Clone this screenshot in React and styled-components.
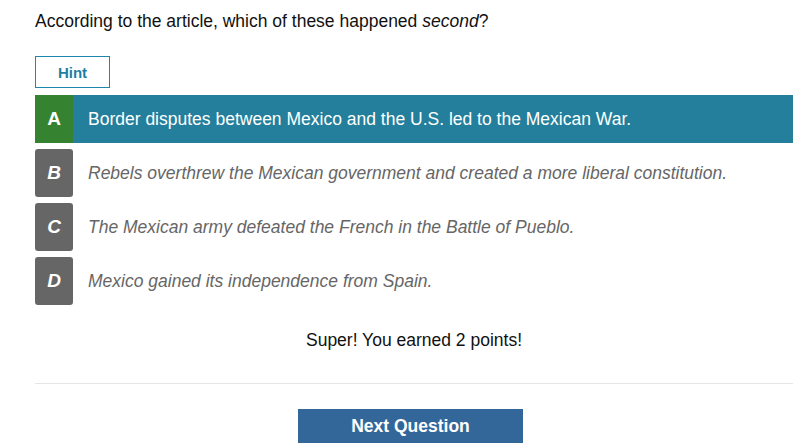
import React from "react";
import styled, { createGlobalStyle } from "styled-components";

const Global = createGlobalStyle`
  html, body { margin: 0; padding: 0; background: #fff; }
  body { font-family: "Liberation Sans", Arial, sans-serif; }
`;

const Page = styled.div`
  width: 810px;
  height: 447px;
  box-sizing: border-box;
  padding: 11px 17px 0 35px;
  overflow: hidden;
`;

const Question = styled.div`
  font-size: 17.5px;
  line-height: 20px;
  color: #111;
  em { font-style: italic; }
`;

const HintButton = styled.button`
  margin-top: 25px;
  width: 75px;
  height: 32px;
  box-sizing: border-box;
  border: 1px solid #1f87ad;
  background: #fff;
  color: #1f7fa3;
  font-family: "Liberation Sans", Arial, sans-serif;
  font-weight: bold;
  font-size: 15px;
  padding: 0;
  display: block;
`;

const Choices = styled.div`
  margin-top: 7px;
  display: flex;
  flex-direction: column;
  gap: 6px;
`;

const Choice = styled.div`
  display: flex;
  align-items: center;
  height: 48px;
  background: ${(p) => (p.$selected ? "#237f9b" : "transparent")};
`;

const Letter = styled.div`
  width: 38px;
  height: 48px;
  flex: none;
  display: flex;
  align-items: center;
  justify-content: center;
  color: #fff;
  font-weight: bold;
  font-size: 19px;
  font-style: ${(p) => (p.$selected ? "normal" : "italic")};
  background: ${(p) => (p.$selected ? "#358331" : "#666666")};
  border-radius: ${(p) => (p.$selected ? "0" : "3px")};
`;

const ChoiceText = styled.div`
  margin-left: 15px;
  font-size: 17.5px;
  color: ${(p) => (p.$selected ? "#fff" : "#666")};
  font-style: ${(p) => (p.$selected ? "normal" : "italic")};
`;

const Feedback = styled.div`
  margin-top: 25px;
  text-align: center;
  font-size: 17.5px;
  color: #111;
  line-height: 20px;
`;

const Divider = styled.hr`
  margin: 33px 0 0;
  border: none;
  border-top: 1px solid #e6e6e6;
`;

const Footer = styled.div`
  display: flex;
  justify-content: center;
  margin-top: 25px;
`;

const NextButton = styled.button`
  width: 225px;
  height: 34px;
  margin-right: 7px;
  border: none;
  background: #346799;
  color: #fff;
  font-family: "Liberation Sans", Arial, sans-serif;
  font-weight: bold;
  font-size: 17.5px;
  padding: 0;
`;

const choices = [
  { l: "A", t: "Border disputes between Mexico and the U.S. led to the Mexican War.", s: true },
  { l: "B", t: "Rebels overthrew the Mexican government and created a more liberal constitution." },
  { l: "C", t: "The Mexican army defeated the French in the Battle of Pueblo." },
  { l: "D", t: "Mexico gained its independence from Spain." },
];

export default function App() {
  return (
    <>
      <Global />
      <Page>
        <Question>
          According to the article, which of these happened <em>second</em>?
        </Question>
        <HintButton>Hint</HintButton>
        <Choices>
          {choices.map((c) => (
            <Choice key={c.l} $selected={c.s}>
              <Letter $selected={c.s}>{c.l}</Letter>
              <ChoiceText $selected={c.s}>{c.t}</ChoiceText>
            </Choice>
          ))}
        </Choices>
        <Feedback>Super! You earned 2 points!</Feedback>
        <Divider />
        <Footer>
          <NextButton>Next Question</NextButton>
        </Footer>
      </Page>
    </>
  );
}
